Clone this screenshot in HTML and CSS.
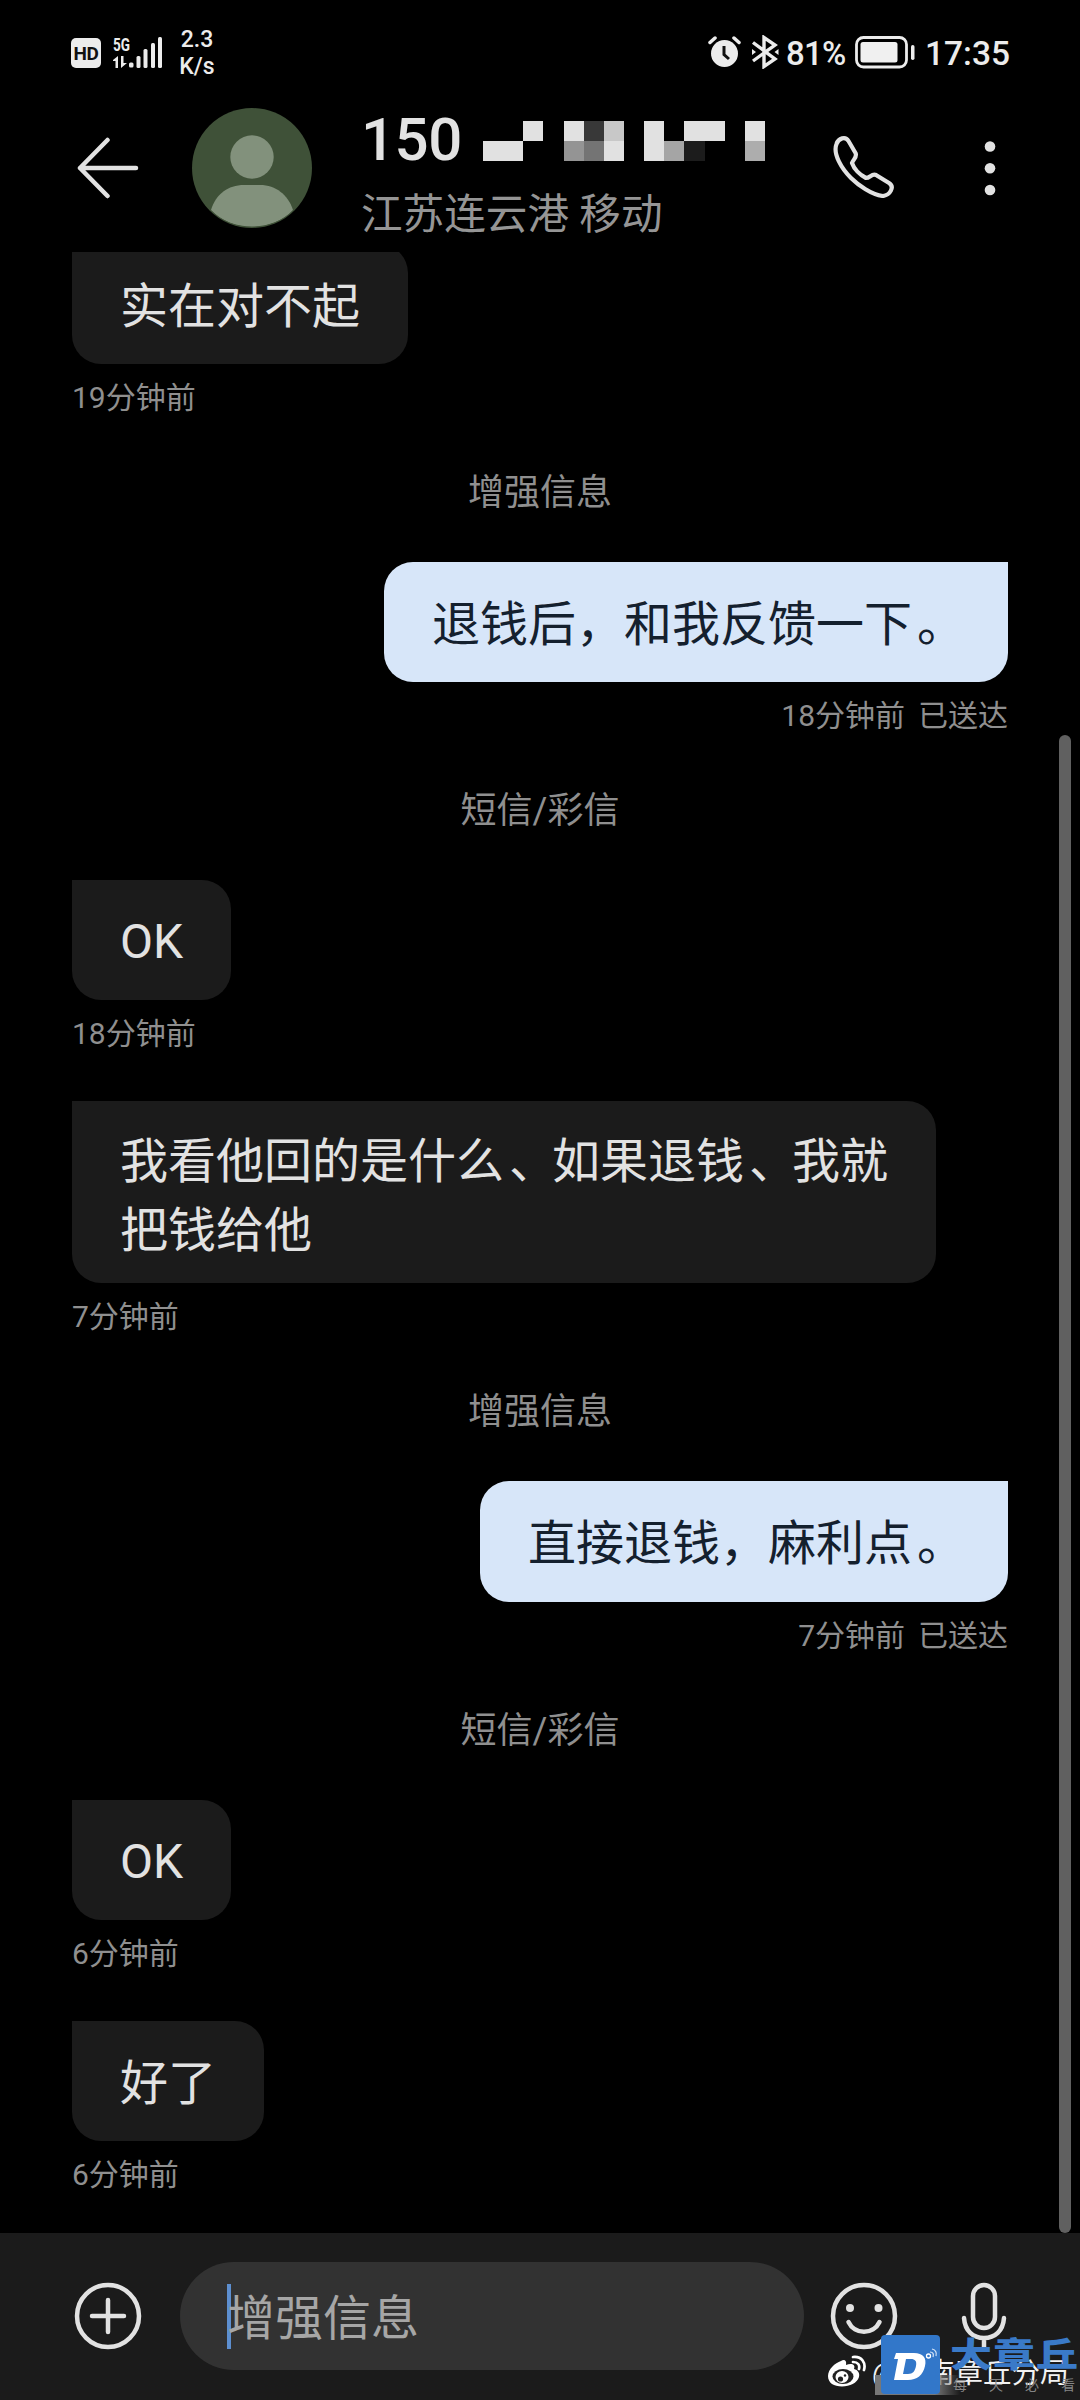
FILE: index.html
```html
<!DOCTYPE html>
<html lang="zh-CN">
<head>
<meta charset="utf-8">
<title>信息</title>
<link rel="stylesheet" href="styles.css">
</head>
<body>
<div class="phone">
  <div class="statusbar">
    <div class="status-left">
      <span class="hd">HD</span>
      <svg class="signal" width="50" height="32" viewBox="0 0 50 32" fill="#ececec">
        <text class="signal-text" x="0" y="14" textLength="17" lengthAdjust="spacingAndGlyphs">5G</text>
        <path d="M0 23l5-4v12H2.500v-7H0zM8 19h2.500v7H14l-6 5z"/>
        <rect x="16" y="25.500" width="4.500" height="5" rx="1.500"/>
        <rect x="23.500" y="19" width="4" height="12" rx="1.500"/>
        <rect x="30.500" y="12" width="4" height="19" rx="1.500"/>
        <rect x="38" y="6" width="4" height="25" rx="1.500"/>
        <rect x="45" y="0" width="4" height="31" rx="1.500"/>
      </svg>
      <span class="speed"><span>2.3</span><span>K/s</span></span>
    </div>
    <div class="status-right">
      <svg class="alarm" width="34" height="32" viewBox="0 0 34 32">
        <circle cx="16.500" cy="17.500" r="13.500" fill="#ececec"/>
        <path d="M2 6.500l5-4.500M31 6.500l-5-4.500" stroke="#ececec" stroke-width="3.500" stroke-linecap="round"/>
        <path d="M16 10v8.500l5 4.500" fill="none" stroke="#111" stroke-width="3"/>
      </svg>
      <svg class="bt" width="28" height="34" viewBox="0 0 28 34" fill="none" stroke="#ececec" stroke-width="3.400">
        <path d="M2 7.500L24 24l-11 7.500V2.500L24 10 2 26"/>
        <path d="M1 14v6l4-3zM27.500 14v6l-4-3z" fill="#ececec" stroke="none"/>
      </svg>
      <span class="percent">81%</span>
      <svg class="battery" width="60" height="33" viewBox="0 0 60 33">
        <rect x="1.500" y="1.500" width="50" height="29.500" rx="7" fill="none" stroke="#ececec" stroke-width="2.800"/>
        <rect x="5.500" y="6" width="37" height="20.500" rx="2.500" fill="#f0f0f0"/>
        <rect x="56" y="9" width="3.500" height="15" rx="1.700" fill="#ececec"/>
      </svg>
      <span class="clock">17:35</span>
    </div>
  </div>

  <div class="header">
    <svg class="back" width="62" height="62" viewBox="0 0 62 62" fill="none" stroke="#e2e2e2" stroke-width="4.500" stroke-linecap="round" stroke-linejoin="round">
      <path d="M59 31H3M30.500 3L3 31l27.500 28"/>
    </svg>
    <svg class="avatar" width="120" height="120" viewBox="0 0 120 120">
      <clipPath id="face"><circle cx="60" cy="60" r="59"/></clipPath>
      <circle cx="60" cy="60" r="60" fill="#3f5138"/>
      <g clip-path="url(#face)" fill="#82917c">
        <circle cx="60" cy="49" r="21.700"/>
        <path d="M19 102C24 86 36 77 52 77h16c16 0 28 10 33 25-20 22-62 22-82 0z"/>
      </g>
    </svg>
    <div class="contact">
      <div class="number"><span>150</span>
        <svg class="mosaic" width="282" height="40" viewBox="0 0 14 2" preserveAspectRatio="none" shape-rendering="crispEdges">
          <g fill="#e1e1e1">
            <path d="M0 1h2v1H0zM2 0h1v1H2zM4 0h1v1H4zM6 1h1v1H6zM8 0h1v2H8zM10 0h2v1h-2zM13 0h1v1h-1z"/>
          </g>
          <path d="M5 0h1v1H5z" fill="#383838"/>
          <path d="M6 0h1v1H6z" fill="#c8c8c8"/>
          <path d="M4 1h1v1H4z" fill="#949494"/>
          <path d="M5 1h1v1H5z" fill="#747474"/>
          <path d="M9 1h1v1H9z" fill="#a5a5a5"/>
          <path d="M10 1h1v1h-1z" fill="#1c1c1c"/>
          <path d="M13 1h1v1h-1z" fill="#adadad"/>
        </svg>
      </div>
      <div class="place">江苏连云港 移动</div>
    </div>
    <svg class="call" width="62" height="62" viewBox="0 0 62 62" fill="none" stroke="#e2e2e2" stroke-width="4.200" stroke-linejoin="round">
      <path d="M3.500 8c2-6 9-8 12-3l7 12c2 4-2 6-3.500 10 2 6 8 12 14 15 4 0 6-5 10-3l13 8c6 4 1 12-6 13-11-1-25-11-32-18C9 33-.5 18 3.500 8z"/>
    </svg>
    <svg class="more" width="12" height="56" viewBox="0 0 12 56" fill="#e2e2e2">
      <circle cx="6" cy="6.500" r="5.300"/><circle cx="6" cy="28.300" r="5.300"/><circle cx="6" cy="50" r="5.300"/>
    </svg>
  </div>

  <div class="chat">
    <div class="msg in"><div class="bubble">实在对不起</div><div class="meta">19分钟前</div></div>
    <div class="channel">增强信息</div>
    <div class="msg out"><div class="bubble">退钱后，和我反馈一下<span class="stop">。</span></div><div class="meta">18分钟前<span class="sent">已送达</span></div></div>
    <div class="channel">短信/彩信</div>
    <div class="msg in"><div class="bubble latin">OK</div><div class="meta">18分钟前</div></div>
    <div class="msg in"><div class="bubble long">我看他回的是什么<span class="stop">、</span>如果退钱<span class="stop">、</span>我就把钱给他</div><div class="meta">7分钟前</div></div>
    <div class="channel">增强信息</div>
    <div class="msg out"><div class="bubble">直接退钱，麻利点<span class="stop">。</span></div><div class="meta">7分钟前<span class="sent">已送达</span></div></div>
    <div class="channel">短信/彩信</div>
    <div class="msg in"><div class="bubble latin">OK</div><div class="meta">6分钟前</div></div>
    <div class="msg in"><div class="bubble">好了</div><div class="meta">6分钟前</div></div>
    <div class="scrollbar"></div>
  </div>

  <div class="composer">
    <svg class="plus" width="68" height="68" viewBox="0 0 68 68" fill="none" stroke="#e2e2e2" stroke-width="4.500" stroke-linecap="round">
      <circle cx="34" cy="34" r="31"/><path d="M34 18v32M18 34h32"/>
    </svg>
    <div class="field"><span class="caret"></span><span class="hint">增强信息</span></div>
    <svg class="smile" width="68" height="68" viewBox="0 0 68 68" fill="none" stroke="#e2e2e2" stroke-width="4.500" stroke-linecap="round">
      <circle cx="34" cy="34" r="31"/><path d="M18.500 40c6 13 25 13 31 0"/>
      <circle cx="20" cy="26" r="4" fill="#e2e2e2" stroke="none"/><circle cx="48.500" cy="26" r="4" fill="#e2e2e2" stroke="none"/>
    </svg>
    <svg class="mic" width="46" height="68" viewBox="0 0 46 68" fill="none" stroke="#e2e2e2" stroke-width="4.500" stroke-linecap="round">
      <rect x="12" y="3" width="22" height="43" rx="11"/><path d="M3 36c1 13 9 20 20 20s19-7 20-20M23 56v9"/>
    </svg>
  </div>

  <div class="weibo-mark">
    <svg width="40" height="34" viewBox="0 0 40 34">
      <path d="M14 6c3-2 6-1 5 4 5-2 10-1 8 4 4 1 6 4 5 8-2 6-9 9.500-17 9.500S1 28 1 21 8 8 14 6z" fill="#fff"/>
      <ellipse cx="16" cy="21.500" rx="10.500" ry="7.500" fill="#222"/>
      <ellipse cx="15" cy="22" rx="6.500" ry="6" fill="#fff"/>
      <circle cx="13.500" cy="24" r="2.600" fill="#222"/><circle cx="18" cy="20.500" r="1.200" fill="#222"/>
      <path d="M26 2c9-1 13 6 11 13M26 7c5 0 7 3 6 7" fill="none" stroke="#fff" stroke-width="2.700" stroke-linecap="round"/>
    </svg>
    <span>@济南章丘分局</span>
  </div>
  <div class="logo-glow"></div>
  <div class="logo-mark">
    <svg width="59" height="59" viewBox="0 0 59 59">
      <rect width="59" height="59" rx="4" fill="#3277c9"/>
      <path fill-rule="evenodd" d="M15 18h18c9 0 13 5 11 13-2 9-8 14-17 14H13l4-21h-4zM25 24l-3 15h5c5 0 7-3 8-8s-1-7-5-7z" fill="#fff"/>
      <circle cx="47.500" cy="21" r="2" fill="none" stroke="#fff" stroke-width="1.300"/>
      <path d="M49 17c3 0 4 2 3 5M51 14c4 1 5 3 4 7" fill="none" stroke="#d5e5f7" stroke-width="1.200"/>
    </svg>
  </div>
  <div class="brand">大章丘</div>
  <div class="slogan"><span>每</span><span>天</span><span>必</span><span>看</span></div>
</div>
</body>
</html>
```

FILE: styles.css
```css
* { box-sizing: border-box; }
body {
  margin: 0;
  background: #000;
  font-family: Roboto, "Noto Sans CJK SC", sans-serif;
}
svg { display: block; flex: none; }
.phone {
  position: relative;
  width: 1080px;
  height: 2400px;
  overflow: hidden;
  display: flex;
  flex-direction: column;
  background: #000;
  color: #e2e2e2;
}

/* status bar */
.statusbar {
  height: 100px;
  flex: none;
  display: flex;
  justify-content: space-between;
  padding: 0 69px 0 71px;
  color: #ececec;
}
.status-left, .status-right { display: flex; align-items: flex-start; }
.hd {
  width: 30px;
  height: 30px;
  margin-top: 38px;
  border-radius: 5px;
  background: #ececec;
  color: #111;
  font-size: 19px;
  font-weight: 700;
  letter-spacing: -0.5px;
  line-height: 31px;
  text-align: center;
}
.signal { margin: 37px 0 0 12px; overflow: visible; }
.signal-text { font-size: 19px; font-weight: 700; }
.speed {
  display: flex;
  flex-direction: column;
  margin: 26px 0 0 15px;
  width: 38px;
  text-align: center;
  font-size: 23px;
  font-weight: 500;
  line-height: 27px;
}
.alarm { margin-top: 36px; }
.bt { margin: 35px 0 0 9px; }
.percent { margin: 34px 0 0 7px; font-size: 33px; font-weight: 500; line-height: 40px; width: 65px; letter-spacing: -0.8px; }
.battery { margin: 36px 0 0 4px; }
.clock { margin: 34px 0 0 10px; font-size: 33.5px; font-weight: 500; line-height: 40px; width: 86px; }

/* header */
.header {
  height: 152px;
  flex: none;
  display: flex;
  align-items: flex-start;
  padding-left: 77px;
}
.back { margin-top: 37px; }
.avatar { margin: 8px 0 0 53px; }
.contact { width: 410px; margin-left: 49px; }
.number {
  display: flex;
  height: 80px;
  font-size: 60px;
  font-weight: 500;
  line-height: 80px;
}
.number span { width: 122px; letter-spacing: -0.5px; }
.mosaic { margin-top: 21px; }
.place {
  height: 60px;
  margin-top: 5px;
  font-size: 41.6px;
  line-height: 60px;
  color: #959595;
  white-space: nowrap;
}
.call { margin: 36px 0 0 62px; }
.more { margin: 40px 0 0 89px; }

/* conversation */
.chat {
  position: relative;
  height: 1981px;
  flex: none;
  overflow: hidden;
  padding: 0 72px;
}
.msg {
  display: flex;
  flex-direction: column;
  align-items: flex-start;
  padding-bottom: 33px;
}
.msg:first-child { margin-top: -8.5px; }
.msg.out { align-items: flex-end; }
.bubble {
  min-height: 120.3px;
  padding: 28px 48px 20px;
  border-radius: 0 29px 29px 29px;
  background: #1b1b1b;
  color: #e2e2e2;
  font-size: 48px;
  line-height: 70px;
}
.bubble.latin { padding-top: 27px; }
.bubble.long { width: 864px; padding: 26px 46px 18px 48px; line-height: 69px; }
.out .bubble {
  border-radius: 29px 0 29px 29px;
  background: #d7e6f9;
  color: #14202e;
}
.stop { position: relative; left: 5px; }
.meta {
  height: 68px;
  font-size: 30px;
  line-height: 68px;
  color: #8f8f8f;
}
.sent { margin-left: 13px; }
.channel {
  height: 54px;
  margin-bottom: 43px;
  text-align: center;
  font-size: 36px;
  line-height: 56px;
  color: #8f8f8f;
}
.scrollbar {
  position: absolute;
  right: 9px;
  top: 483px;
  width: 12px;
  height: 1498px;
  border-radius: 6px;
  background: #606060;
}

/* composer */
.composer {
  height: 167px;
  flex: none;
  display: flex;
  align-items: flex-start;
  padding: 29px 0 0 74px;
  background: #1b1b1b;
}
.plus, .smile, .mic { margin-top: 20px; }
.field {
  width: 624px;
  height: 108px;
  margin-left: 38px;
  padding-left: 47px;
  display: flex;
  align-items: center;
  border-radius: 54px;
  background: #323232;
  font-size: 48px;
  color: #a6a6a6;
}
.caret { width: 4px; height: 65px; background: #5d8fd0; }
.hint { margin-left: -4px; padding-top: 6px; line-height: 66px; }
.smile { margin-left: 26px; }
.mic { margin-left: 63px; }

/* watermarks laid over the composer */
.weibo-mark {
  position: absolute;
  left: 827px;
  top: 2355px;
  display: flex;
  white-space: nowrap;
  font-size: 28.5px;
  line-height: 38px;
  color: #f2f2f2;
}
.weibo-mark span { margin-left: 5px; }
.logo-glow {
  position: absolute;
  left: 875px;
  top: 2375px;
  width: 85px;
  height: 20px;
  background: linear-gradient(90deg, #777 70%, transparent);
}
.logo-mark { position: absolute; left: 881px; top: 2335px; }
.brand {
  position: absolute;
  left: 950px;
  top: 2331px;
  font-size: 42px;
  line-height: 50px;
  font-weight: 900;
  letter-spacing: 1px;
  white-space: nowrap;
  color: #3a7ac8;
  transform: scaleY(0.8);
}
.slogan {
  position: absolute;
  left: 953px;
  top: 2375px;
  width: 122px;
  display: flex;
  justify-content: space-between;
  font-size: 14px;
  line-height: 20px;
  color: #858585;
}
```
